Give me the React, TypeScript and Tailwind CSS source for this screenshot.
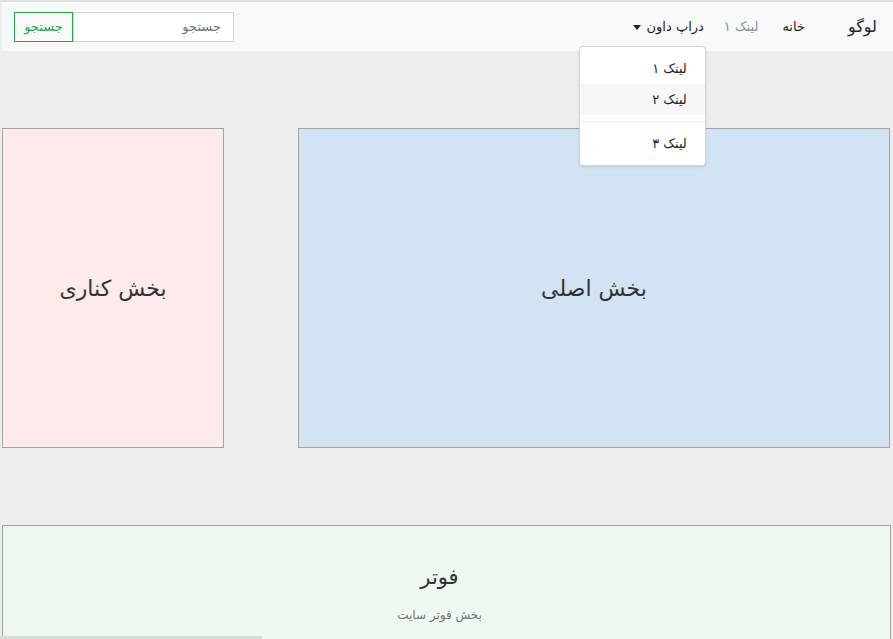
import React from "react";

const font = { fontFamily: '"DejaVu Sans", "Noto Sans", sans-serif' };

function Navbar() {
  return (
    <nav className="relative flex h-[49px] items-center bg-[#f8f9fa] pr-4 pl-3 text-[13px]">
      {/* Brand */}
      <a className="ml-[31px] text-[16px] text-[#222]">لوگو</a>

      {/* Links */}
      <ul className="flex items-center">
        <li className="px-[12px] py-2 text-[#222]">خانه</li>
        <li className="px-[12px] py-2 text-[#8a8f94]">لینک ۱</li>
        <li className="relative px-[8px] py-2 text-[#222]">
          <span className="flex items-center gap-[6px]">
            دراپ داون
            <span className="mt-[1px] inline-block h-0 w-0 border-t-[5px] border-r-[4px] border-l-[4px] border-t-[#222] border-r-transparent border-l-transparent" />
          </span>

          {/* Open dropdown menu */}
          <div className="absolute top-[37px] right-[6px] z-10 w-[127px] rounded-[4px] border border-[#d6d6d6] bg-white py-[6px] shadow-sm">
            <div className="h-[31px] px-[18px] leading-[31px] text-[#222]">لینک ۱</div>
            <div className="h-[31px] bg-[#f6f7f8] px-[18px] leading-[31px] text-[#222]">لینک ۲</div>
            <div className="my-[6px] h-px bg-[#e9ecef]" />
            <div className="h-[31px] px-[18px] leading-[31px] text-[#222]">لینک ۳</div>
          </div>
        </li>
      </ul>

      {/* Search form */}
      <form className="mr-auto flex h-[30px]">
        <input
          placeholder="جستجو"
          className="h-[30px] w-[161px] border border-[#ced4da] bg-white px-3 text-[13px] text-[#555] placeholder:text-[#6c757d] outline-none"
          style={font}
        />
        <button
          type="button"
          className="h-[30px] w-[59px] border border-[#28a745] text-[13px] text-[#28a745]"
          style={font}
        >
          جستجو
        </button>
      </form>
    </nav>
  );
}

export default function App() {
  return (
    <div dir="rtl" className="relative h-screen overflow-hidden border-t-2 border-[#dedfe0] bg-[#ededed] pl-[2px]" style={font}>
      <Navbar />

      {/* Content row */}
      <div className="mt-[77px] flex h-[320px] justify-between pr-[3px]">
        <section className="flex w-[592px] items-center justify-center border border-[#a3a3a3] bg-[#d2e3f3]">
          <h2 className="text-[22px] text-[#333]">بخش اصلی</h2>
        </section>
        <aside className="flex w-[222px] items-center justify-center border border-[#a3a3a3] bg-[#fdeaea]">
          <h2 className="text-[22px] text-[#333]">بخش کناری</h2>
        </aside>
      </div>

      {/* Footer */}
      <footer className="mt-[77px] mr-[2px] flex h-[130px] flex-col items-center border border-[#a3a3a3] bg-[#eef8ef] pt-[36px] pr-[14px]">
        <h3 className="text-[21px] text-[#333]">فوتر</h3>
        <p className="mt-[12px] text-[12px] text-[#6c757d]">بخش فوتر سایت</p>
      </footer>

      {/* Horizontal scrollbar thumb */}
      <div className="absolute bottom-0 left-0 h-[3px] w-[262px] bg-[#d7dadb]" />
    </div>
  );
}
